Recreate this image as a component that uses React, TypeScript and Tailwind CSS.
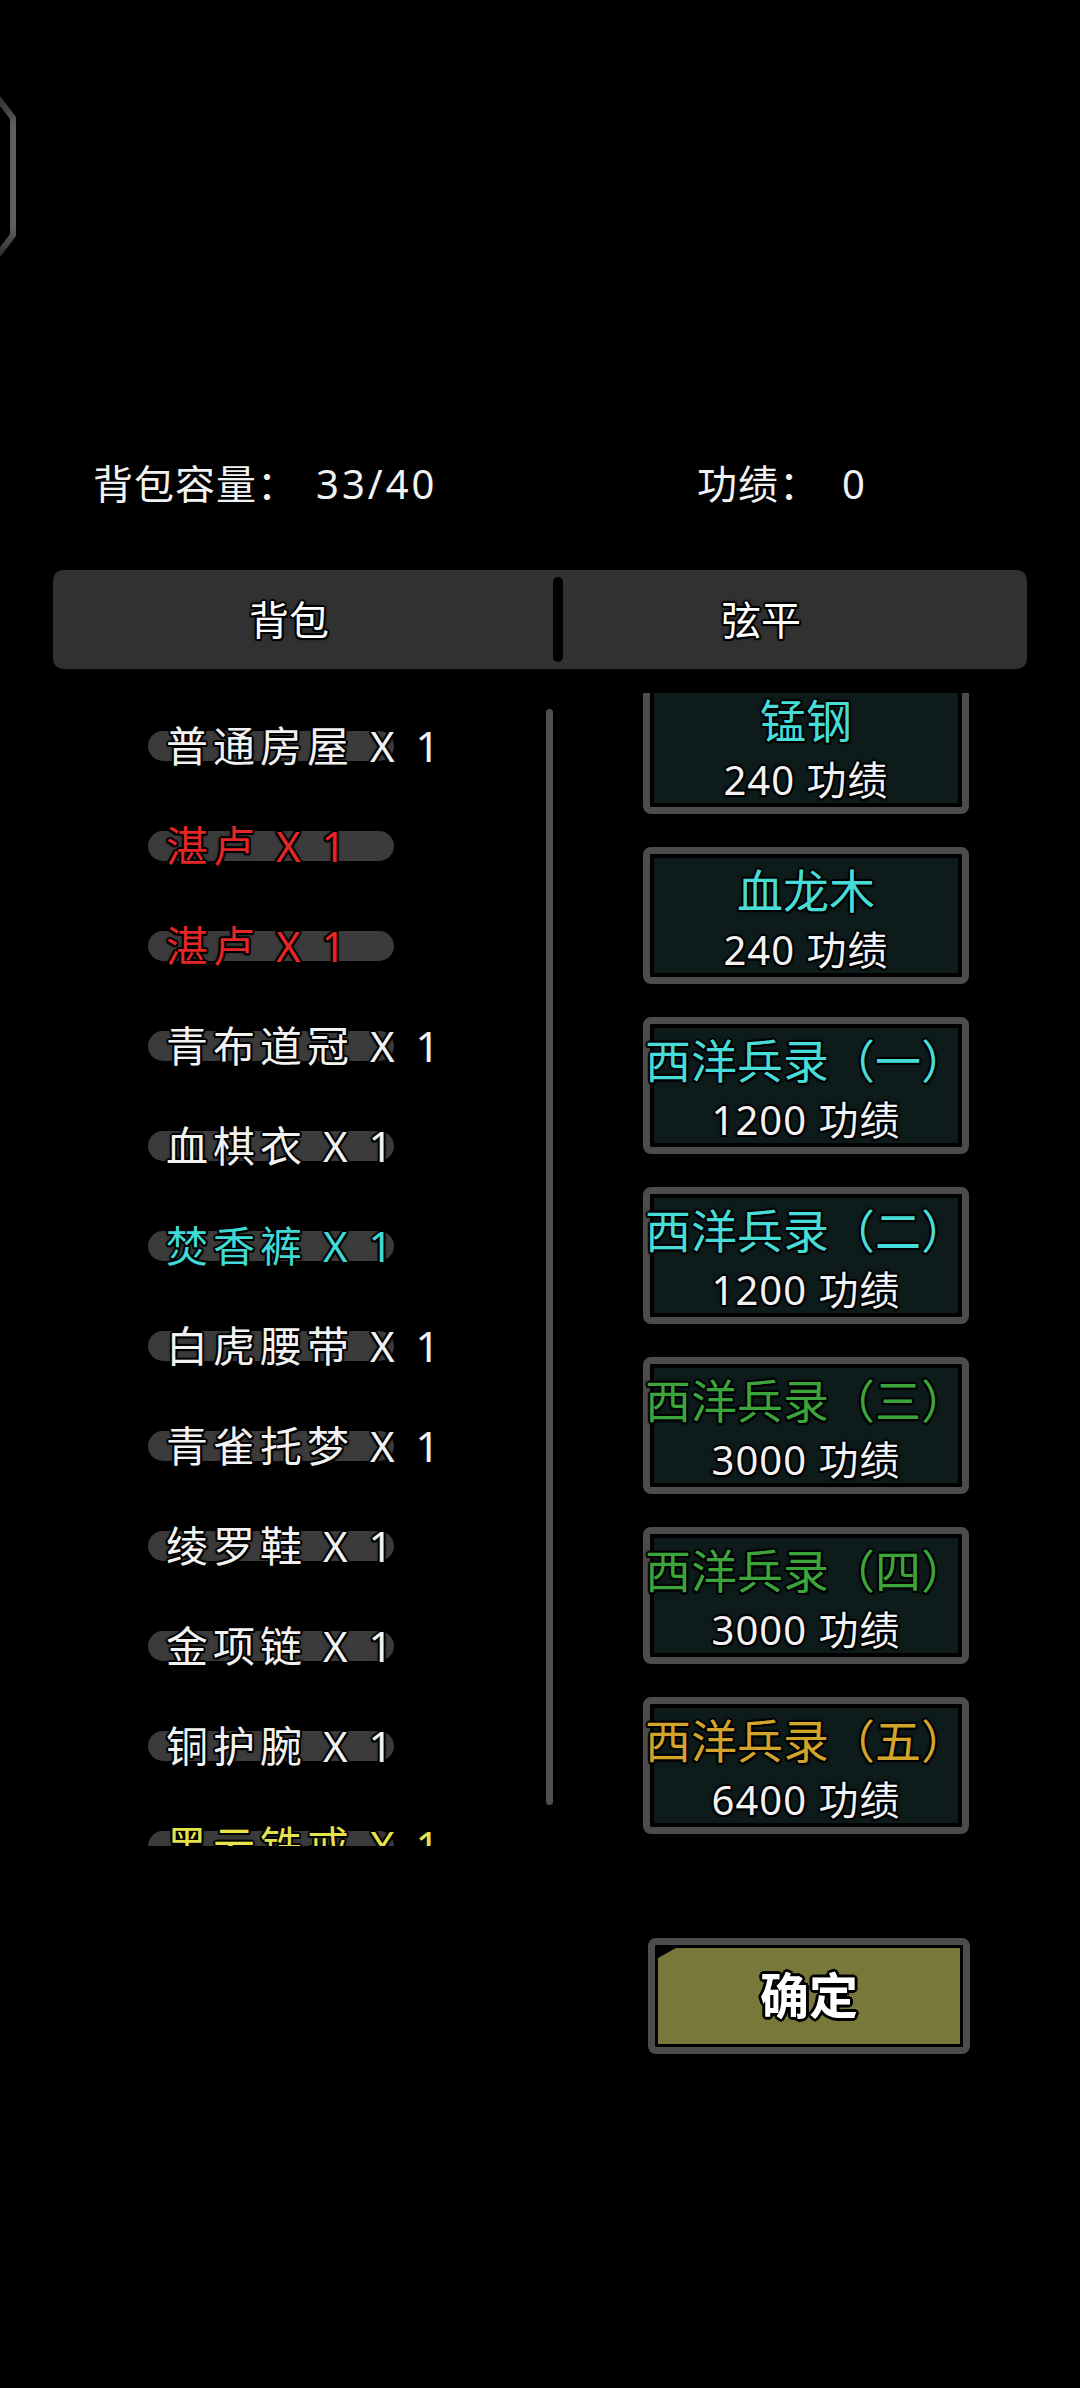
import React from "react";

const OUTLINE =
  "[text-shadow:2px_0_0_#000,-2px_0_0_#000,0_2px_0_#000,0_-2px_0_#000,1.5px_1.5px_0_#000,-1.5px_-1.5px_0_#000,1.5px_-1.5px_0_#000,-1.5px_1.5px_0_#000,0_0_4px_#000]";

const items: { name: string; color: string }[] = [
  { name: "普通房屋 X 1", color: "text-[#f2f2f2]" },
  { name: "湛卢 X 1", color: "text-[#e42626]" },
  { name: "湛卢 X 1", color: "text-[#e42626]" },
  { name: "青布道冠 X 1", color: "text-[#f2f2f2]" },
  { name: "血棋衣 X 1", color: "text-[#f2f2f2]" },
  { name: "焚香裤 X 1", color: "text-[#3fd9d6]" },
  { name: "白虎腰带 X 1", color: "text-[#f2f2f2]" },
  { name: "青雀托梦 X 1", color: "text-[#f2f2f2]" },
  { name: "绫罗鞋 X 1", color: "text-[#f2f2f2]" },
  { name: "金项链 X 1", color: "text-[#f2f2f2]" },
  { name: "铜护腕 X 1", color: "text-[#f2f2f2]" },
  { name: "黑云铁戒 X 1", color: "text-[#e6e24a]" },
];

const cards: { name: string; price: string; color: string }[] = [
  { name: "锰钢", price: "240 功绩", color: "text-[#46dcd8]" },
  { name: "血龙木", price: "240 功绩", color: "text-[#46dcd8]" },
  { name: "西洋兵录（一）", price: "1200 功绩", color: "text-[#46dcd8]" },
  { name: "西洋兵录（二）", price: "1200 功绩", color: "text-[#46dcd8]" },
  { name: "西洋兵录（三）", price: "3000 功绩", color: "text-[#3ba53c]" },
  { name: "西洋兵录（四）", price: "3000 功绩", color: "text-[#3ba53c]" },
  { name: "西洋兵录（五）", price: "6400 功绩", color: "text-[#d2a42a]" },
];

export default function App() {
  return (
    <div className="relative w-[1080px] h-[2388px] bg-black overflow-hidden font-['Noto_Sans','Noto_Sans_CJK_SC',sans-serif] text-[#f2f2f2]">
      {/* partial octagon frame at left edge */}
      <svg
        className="absolute left-0 top-[90px]"
        width="24"
        height="180"
        viewBox="0 0 24 180"
        fill="none"
      >
        <defs>
          <linearGradient id="octg" x1="0" y1="0" x2="0" y2="1">
            <stop offset="0" stopColor="#222" />
            <stop offset="0.2" stopColor="#5e5e5e" />
            <stop offset="0.8" stopColor="#5e5e5e" />
            <stop offset="1" stopColor="#222" />
          </linearGradient>
        </defs>
        <path
          d="M -8 0 L 13 28 L 13 145 L -8 173"
          stroke="url(#octg)"
          strokeWidth="6"
          strokeLinejoin="miter"
        />
      </svg>

      {/* header stats */}
      <div className="flex items-center h-[48px] mt-[460px] text-[40px] leading-none tracking-[1px]">
        <div className="ml-[93px] w-[604px] flex items-center">
          <span>背包容量：</span>
          <span className="ml-[18px] tracking-[3px]">33/40</span>
        </div>
        <div className="flex items-center">
          <span>功绩：</span>
          <span className="ml-[22px]">0</span>
        </div>
      </div>

      {/* tab bar */}
      <div className="mt-[62px] ml-[53px] w-[974px] h-[99px] rounded-[10px] bg-[#313131] flex items-center">
        <div className={`w-[500px] pr-[28px] flex justify-center text-[40px] text-white ${OUTLINE}`}>
          背包
        </div>
        <div className="w-[10px] h-[85px] rounded-full bg-black" />
        <div className={`flex-1 pr-[68px] flex justify-center text-[40px] text-white ${OUTLINE}`}>
          弦平
        </div>
      </div>

      {/* content */}
      <div className="mt-[24px] flex h-[1153px]">
        {/* left list */}
        <div className="w-[546px] h-[1153px] overflow-hidden pt-[3px]">
          {items.map((it, i) => (
            <div key={i} className="grid items-center h-[100px]">
              <div className="col-start-1 row-start-1 ml-[148px] w-[246px] h-[30px] rounded-full bg-[#3b3b3b]" />
              <div
                className={`col-start-1 row-start-1 ml-[166px] text-[42px] leading-[100px] tracking-[5px] whitespace-nowrap ${it.color} ${OUTLINE}`}
              >
                {it.name}
              </div>
            </div>
          ))}
        </div>
        {/* scrollbar */}
        <div className="mt-[16px] w-[7px] h-[1096px] rounded-full bg-[#4f4f4f]" />

        {/* right list */}
        <div className="ml-[90px] w-[326px] h-[1153px] overflow-hidden">
          <div className="-mt-[16px] flex flex-col gap-[33px]">
            {cards.map((c, i) => (
              <div
                key={i}
                className="w-[326px] h-[137px] rounded-[8px] border-[7px] border-[#4c4c4c] bg-black p-[4px]"
              >
                <div className="h-[115px] bg-[#0d1b1b] flex flex-col">
                  <div
                    className={`flex justify-center whitespace-nowrap text-[46px] leading-[64px] h-[64px] ${c.color} ${OUTLINE}`}
                  >
                    {c.name}
                  </div>
                  <div
                    className={`flex justify-center whitespace-nowrap text-[40px] leading-[56px] h-[56px] tracking-[1px] text-[#f2f2f2] ${OUTLINE}`}
                  >
                    {c.price}
                  </div>
                </div>
              </div>
            ))}
          </div>
        </div>
      </div>

      {/* confirm button */}
      <div className="mt-[92px] ml-[648px] w-[322px] h-[116px] rounded-[8px] border-[7px] border-[#4c4c4c] bg-black p-[3px]">
        <div className="w-full h-full bg-[#78783a] [clip-path:polygon(18px_0,100%_0,100%_100%,0_100%,0_10px)] flex items-center justify-center">
          <span
            className={`text-[49px] font-bold text-white [text-shadow:3px_0_0_#000,-3px_0_0_#000,0_3px_0_#000,0_-3px_0_#000,2px_2px_0_#000,-2px_-2px_0_#000,2px_-2px_0_#000,-2px_2px_0_#000]`}
          >
            确定
          </span>
        </div>
      </div>
    </div>
  );
}
